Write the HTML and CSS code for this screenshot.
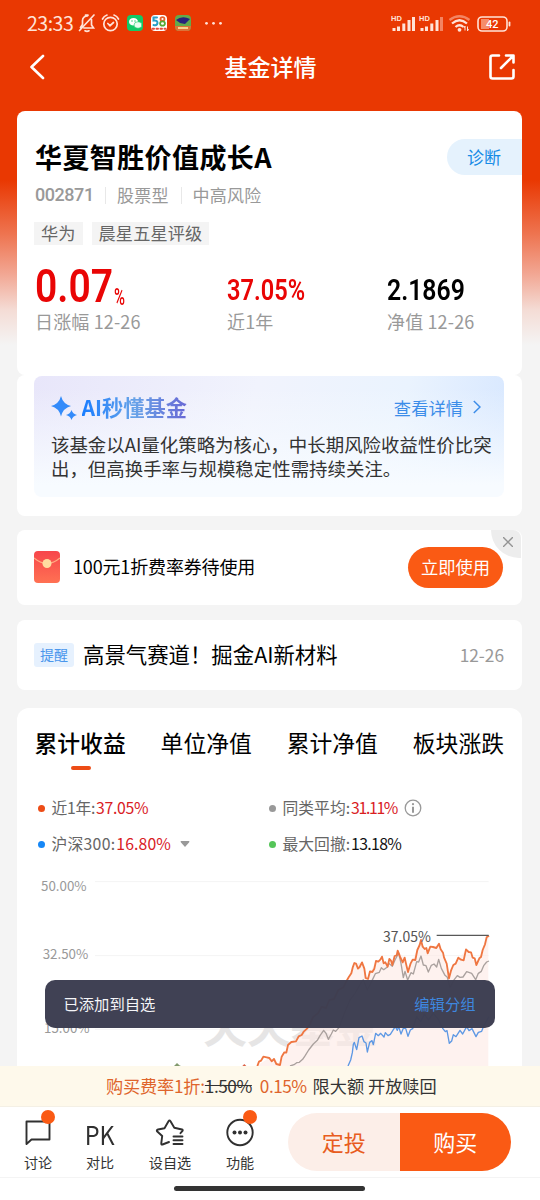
FILE: index.html
```html
<!DOCTYPE html>
<html lang="zh-CN">
<head>
<meta charset="utf-8">
<title>基金详情</title>
<link rel="stylesheet" href="styles.css">
</head>
<body>
<div class="app">
  <div class="status">
    <span class="clock">23:33</span>
    <svg class="status-left" width="150" height="22" viewBox="0 0 150 22" fill="none" stroke="#ffe3d8" stroke-width="1.700" stroke-linecap="round">
      <path d="M3.500 15.500 5.500 12.500V8.500C5.500 5.500 8 3.800 10.500 3.800M14.500 7.500V13L16.500 16H7M2.500 18.500 17 3M8 18.800Q10 20 12 18.800M8.500 3.200H11"/>
      <circle cx="33.500" cy="12" r="6.700"/><path d="M30.800 11.500 33 13.700 36.500 10.500M25.500 7Q27 4 30 3M37 3Q40 4 41.500 7"/>
      <g stroke="none"><rect x="50" y="3" width="16" height="16" rx="4" fill="#12c967"/><ellipse cx="56.500" cy="9.800" rx="4.500" ry="3.800" fill="#fff"/><ellipse cx="61" cy="13" rx="4" ry="3.300" fill="#e8fff0" stroke="#12c967" stroke-width=".6"/><circle cx="55" cy="9" r=".7" fill="#12c967"/><circle cx="58" cy="9" r=".7" fill="#12c967"/>
      <rect x="74" y="3" width="16" height="16" rx="4" fill="#fff"/></g>
      <path d="M80 5.500H76.500V8.500Q80.500 8 80.500 11 80 14 76.500 13" stroke="#29a0c8" stroke-width="2"/><ellipse cx="85.500" cy="7" rx="2" ry="1.800" stroke="#e8632c" stroke-width="1.800"/><ellipse cx="85.500" cy="11.500" rx="2.400" ry="2.200" stroke="#55a935" stroke-width="1.800"/><path d="M75.500 16.700H88.500" stroke="#e54a3a" stroke-width="2" stroke-dasharray="1.500 2.500"/>
      <g stroke="none"><rect x="98" y="3" width="16" height="16" rx="4" fill="#62a94c"/><path d="M99 8Q105 3 113 7L108 12 103 11Z" fill="#28227c"/><path d="M98 14H114Q114 19 110 19H102Q98 19 98 14Z" fill="#dd7138"/><path d="M101 15H111V17H101Z" fill="#f8d28c"/></g>
      <g fill="#ffe3d8" stroke="none"><circle cx="129.500" cy="11.300" r="1.400"/><circle cx="136.500" cy="11.300" r="1.400"/><circle cx="143.500" cy="11.300" r="1.400"/></g>
    </svg>
    <svg class="status-right" width="122" height="20" viewBox="0 0 122 20">
      <g fill="#ffe3d8"><text class="hd" x="0" y="6.500">HD</text><path d="M1.500 14h3v3h-3zM6 12.500h3V17H6zM11.300 9.500h3V17h-3zM16.500 6h3v11h-3zM21 3h3v14h-3z"/><text class="hd" x="28" y="6.500">HD</text><path d="M29.500 14h3v3h-3zM34 12.500h3V17h-3zM39.300 9.500h3V17h-3zM44.500 6h3v11h-3z"/><path opacity=".45" d="M49 3h3v14h-3z"/></g>
      <g fill="none" stroke="#ffe3d8" stroke-width="2.300"><path opacity=".45" d="M58.500 6Q68.500-1.500 78.500 6"/><path d="M61 9.500Q68.500 3 76 9.500M64.500 13Q68.500 9.500 72.500 13"/></g><circle cx="68.500" cy="15.800" r="1.900" fill="#ffe3d8"/><path d="M74 12v4.500M76.500 17v-4.500M73 14l1-2M77.500 15l-1 2" stroke="#ffe3d8"/>
      <rect x="87" y="3" width="29" height="14" rx="4" fill="none" stroke="#ffe3d8" stroke-width="1.600"/><path d="M90 5h8v10h-8z" fill="#f58d6b"/><path d="M118.500 8.500v3" stroke="#ffe3d8" stroke-width="1.800" stroke-linecap="round"/><text class="battery" x="95" y="14" fill="#fff">42</text>
    </svg>
  </div>
  <header class="topbar">
    <svg width="16" height="26" viewBox="0 0 16 26" fill="none" stroke="#fff" stroke-width="2.600" stroke-linecap="round" stroke-linejoin="round"><path d="M13 2 1.500 13 13 24"/></svg>
    <h1>基金详情</h1>
    <svg width="26" height="26" viewBox="0 0 26 26" fill="none" stroke="#fff" stroke-width="2.600" stroke-linecap="round" stroke-linejoin="round"><path d="M10 1.500H3.500Q1.500 1.500 1.500 3.500V22.500Q1.500 24.500 3.500 24.500H22.500Q24.500 24.500 24.500 22.500V16M17 1.500H24.500V8.500M24 2 12 14"/></svg>
  </header>

  <section class="card hero">
    <div class="fund-head"><h2>华夏智胜价值成长A</h2><span class="diagnose">诊断</span></div>
    <div class="meta"><span class="code">002871</span><span>股票型</span><span>中高风险</span></div>
    <div class="tags"><span>华为</span><span>晨星五星评级</span></div>
    <div class="stats">
      <div><div class="figure red"><b class="big">0.07</b><b class="unit">%</b></div><p>日涨幅 12-26</p></div>
      <div><div class="figure red"><b class="mid rate">37.05%</b></div><p>近1年</p></div>
      <div><div class="figure"><b class="mid">2.1869</b></div><p>净值 12-26</p></div>
    </div>
  </section>

  <section class="card ai-card">
    <div class="ai">
      <div class="ai-head">
        <svg width="26" height="26" viewBox="0 0 26 26" fill="#338bfa"><path d="M10 2Q12 10 20 12 12 14 10 22.500 8 14 0 12 8 10 10 2ZM20.500 16Q21.700 19.800 26 21 21.700 22.200 20.500 26 19.300 22.200 15 21 19.300 19.800 20.500 16Z"/></svg>
        <b>AI秒懂基金</b><span>查看详情</span>
        <svg width="8" height="14" viewBox="0 0 8 14" fill="none" stroke="#3c8de9" stroke-width="1.500"><path d="M.8 1 7 7 .8 13"/></svg>
      </div>
      <p>该基金以AI量化策略为核心，中长期风险收益性价比突<br>出，但高换手率与规模稳定性需持续关注。</p>
    </div>
  </section>

  <section class="card coupon">
    <svg class="envelope" width="26" height="32" viewBox="0 0 26 32"><defs><linearGradient id="env" x2="0" y2="1"><stop stop-color="#f7464b"/><stop offset="1" stop-color="#ff7153"/></linearGradient></defs><rect width="26" height="32" rx="4" fill="url(#env)"/><path d="M0 7Q13 18 26 7" fill="none" stroke="#ffad83" stroke-width="1.200"/><circle cx="13" cy="12.500" r="4.500" fill="#ffdca0"/></svg>
    <span class="coupon-text">100元1折费率券待使用</span>
    <span class="use">立即使用</span>
    <span class="close"><svg width="10" height="10" viewBox="0 0 10 10" stroke="#939393" stroke-width="1.400"><path d="M0 0 10 10M10 0 0 10"/></svg></span>
  </section>

  <section class="card notice"><span class="remind">提醒</span><span class="headline">高景气赛道！掘金AI新材料</span><time>12-26</time></section>

  <section class="card performance">
    <nav class="tabs"><span class="active">累计收益</span><span>单位净值</span><span>累计净值</span><span>板块涨跌</span></nav>
    <div class="legend">
      <div><i class="orange"></i><span class="year">近1年:</span><em>37.05%</em></div>
      <div><i></i>同类平均:<em class="ones">31.11%</em><svg class="info" width="18" height="18" viewBox="0 0 18 18"><circle cx="9" cy="9" r="7.800" fill="none" stroke="#999" stroke-width="1.300"/><circle cx="9" cy="5.200" r="1.100" fill="#999"/><path d="M9 7.800v6" stroke="#999" stroke-width="2"/></svg></div>
      <div><i class="blue"></i><span class="index">沪深300:</span><em class="wide">16.80%</em><svg class="caret" width="10" height="6" viewBox="0 0 10 6"><path d="M1 0H9Q10 .5 9 1.500L5 6 1 1.500Q0 .5 1 0Z" fill="#999"/></svg></div>
      <div><i class="green"></i>最大回撤:<em class="dark">13.18%</em></div>
    </div>
    <svg class="chart" width="505" height="195" viewBox="-759 3 1515 585">
      <g stroke="#f4f4f4" stroke-width="3"><path d="M-525 35H656M-525 257H656M-525 478H656"/></g>
      <text class="watermark" x="-200" y="520">天天基金</text>
      <path fill="#fdeae4" fill-opacity=".6" d="M-40 588 0 562 12 572 20 585 28 584 42 548 65 516 95 490 110 475 140 430 175 405 205 370 236 328 256 279 275 279 291 330 318 270 345 275 365 285 384 245 403 263 415 302 440 240 452 213 470 245 507 223 520 260 537 325 550 290 568 263 590 238 619 282 638 240 655 197V588Z"/>
      <g fill="none" stroke-linejoin="round" stroke-width="4">
        <path stroke="#aaa19e" d="M60 588 72 584 80 578 88 577 98 568 106 556 116 540 130 522 142 511 150 497 161 481 168 490 175 508 184 492 190 480 197 484 207 473 223 430 240 390 255 370 272 340 280 329 292 360 305 334 316 311 328 307 334 293 341 299 352 291 356 280 367 289 375 270 386 249 393 280 400 323 405 304 413 330 423 308 430 312 440 275 446 276 453 258 460 285 468 287 475 306 484 286 492 282 500 291 506 268 514 295 525 316 532 322 540 353 551 331 562 317 570 322 579 321 590 305 605 310 617 329 625 310 634 304 641 287 650 276 657 273"/>
        <path stroke="#5d98e4" d="M234 588 242 570 247 548 250 523 253 517 260 539 267 503 276 498 282 515 288 519 292 546 299 517 306 512 310 524 317 490 325 497 332 490 342 501 346 488 354 497 361 493 370 479 376 470 382 481 386 470 393 492 400 475 407 475 414 499 421 480 428 476 440 440 452 455 463 432 475 450 490 430 505 448 518 475 526 485 531 482 538 520 545 513 550 494 558 500 570 481 578 492 590 470 597 482 606 476 618 500 625 487 635 484 642 466 657 440"/>
        <path stroke="#ef7641" stroke-width="5.500" d="M-38 588-33 575-27 572-20 560-10 562-2 564 5 574 12 567 19 582 30 585 35 560 43 547 49 548 54 525 64 516 78 514 86 499 95 495 101 485 112 475 120 462 130 440 144 430 155 410 168 414 178 390 192 387 205 360 220 352 230 332 236 322 244 310 248 293 253 279 258 281 264 296 269 291 276 277 283 296 287 324 294 327 300 304 307 306 313 296 318 273 325 275 331 269 336 260 341 280 346 277 353 290 358 267 363 272 367 285 374 258 380 256 383 242 390 260 398 277 404 263 408 281 414 306 422 280 428 269 436 270 442 240 449 225 453 210 458 230 464 237 469 234 473 250 481 230 489 231 499 234 507 221 512 238 519 248 522 262 530 281 537 325 543 302 550 285 557 281 565 263 573 269 581 271 588 238 596 246 603 247 608 263 614 265 619 285 628 265 633 261 638 240 645 223 650 202 657 197"/>
        <path d="M500 196H656" stroke="#585858"/>
      </g>
      <path fill="#829a6d" d="M-288 588-279 579-272 586-267 588Z"/><path fill="#dc6348" d="M-83 588-77 582-71 588Z"/>
      <g class="axis"><text x="-687" y="64">50.00%</text><text x="-682" y="268">32.50%</text><text x="-678" y="490">15.00%</text><text class="peak" x="339" y="215">37.05%</text></g>
    </svg>
  </section>

  <div class="fee"><span>购买费率1折:</span><s>1.50%</s><span class="cut">0.15%</span><span class="state">限大额 开放赎回</span></div>
  <footer>
    <div class="actions">
      <div><svg width="30" height="30" viewBox="0 0 30 30" fill="none" stroke="#303030" stroke-width="1.900" stroke-linejoin="round"><path d="M3.500 4.500H26.500V22.500H8.500L3.500 27Z"/></svg><i></i><span>讨论</span></div>
      <div><strong>PK</strong><span>对比</span></div>
      <div><svg width="30" height="30" viewBox="0 0 30 30" fill="none" stroke="#303030" stroke-width="1.900" stroke-linejoin="round" stroke-linecap="round"><path d="M14 25 7.500 27.500Q6 28 6.300 26L7.200 19 2 14.200Q1.300 13 3 12.500L9.500 11.300 13.500 4.200Q14.500 2.800 15.500 4.200L19.300 10.800 27 12.500Q28.300 13 27.300 14.200L25.500 16.200M18.500 19.500H27.500M18.500 23.300H27.500M18.500 27H27.500"/></svg><span>设自选</span></div>
      <div><svg width="30" height="30" viewBox="0 0 30 30"><circle cx="15" cy="15.500" r="12.700" fill="none" stroke="#303030" stroke-width="1.900"/><g fill="#303030"><circle cx="9.500" cy="15.500" r="2"/><circle cx="15" cy="15.500" r="2"/><circle cx="20.500" cy="15.500" r="2"/></g></svg><i></i><span>功能</span></div>
    </div>
    <div class="trade"><span>定投</span><span>购买</span></div>
  </footer>
  <div class="home"><span></span></div>
  <div class="toast"><span>已添加到自选</span><a>编辑分组</a></div>
</div>
</body>
</html>
```
FILE: styles.css
```css
* { box-sizing: border-box; }
body { margin: 0; background: #f4f4f4; color: #000; font-family: "Noto Sans CJK SC", sans-serif; white-space: nowrap; }
h1, h2, p { margin: 0; }
i, em { font-style: normal; }
svg { display: block; flex: none; }
.app { position: relative; display: flex; flex-direction: column; width: 540px; height: 1200px; overflow: hidden; background: linear-gradient(#e93802 0, #e93802 180px, #ee7450 234px, #f2a895 275px, #f4dcd5 310px, #f4f4f4 345px); }
.status { display: flex; height: 46px; padding: 12px 27.500px 0 27px; }
.clock { width: 50px; color: #ffe3d8; font-size: 19.500px; line-height: 21px; letter-spacing: -.5px; }
.status-right { margin: 1.500px 0 0 auto; }
.hd { font: bold 7.500px "Liberation Sans", sans-serif; }
.battery { font: 500 11px Roboto, sans-serif; }
.topbar { display: flex; height: 65px; padding: 8px 25px 0 30px; justify-content: space-between; }
.topbar h1 { padding-left: 6px; font-size: 23px; line-height: 25px; font-weight: 500; color: #fff; }
.card { position: relative; flex: none; width: 505px; margin-left: 17px; background: #fff; border-radius: 8px; }
.hero { height: 264px; padding: 28px 0 0 18px; }
.fund-head { display: flex; height: 36px; justify-content: space-between; }
.fund-head h2 { font-size: 27px; line-height: 35px; font-weight: 700; letter-spacing: .4px; }
.diagnose { width: 75px; padding-left: 20px; border-radius: 18px 0 0 18px; background: #e5f2fd; color: #168be6; font-size: 17px; line-height: 35px; }
.meta { display: flex; height: 22px; margin-top: 9px; align-items: center; color: #999; font-size: 17px; line-height: 22px; letter-spacing: .2px; }
.meta span + span { position: relative; margin-left: 12px; padding-left: 12px; }
.meta span + span::before { content: ""; position: absolute; left: 0; top: 3px; width: 1px; height: 17px; background: #e8e8e8; }
.meta .code { width: 58px; font: 500 18px/22px Roboto, sans-serif; letter-spacing: -.45px; }
.tags { display: flex; gap: 9px; margin: 16px 0 0 -1px; }
.tags span { height: 23px; padding: 0 7px; background: #f4f4f4; color: #666; font-size: 17.200px; line-height: 22px; letter-spacing: .1px; }
.stats { display: grid; grid-template-columns: 192px 160px 1fr; margin-top: 21px; }
.figure { position: relative; height: 45px; line-height: 1; font-family: Roboto, sans-serif; }
.figure b { position: absolute; left: 0; transform-origin: 0 100%; line-height: 1; }
.figure .big { bottom: 2px; font-size: 46.500px; font-weight: 600; transform: scaleX(.84); }
.figure .mid { bottom: 6px; font-size: 29.500px; font-weight: 600; transform: scaleX(.84); }
.figure .rate { transform: scaleX(.8); }
.figure .unit { left: 79px; bottom: 4px; font-size: 24px; font-weight: 500; line-height: 20px; transform: scaleX(.62); }
.red { color: #e90505; }
.stats p { color: #999; font-size: 18px; line-height: 20px; letter-spacing: .15px; }
.ai-card { height: 141px; padding: 1px 18px 0 17px; }
.ai { height: 121px; padding: 18px 17px 0; border-radius: 8px; background: linear-gradient(#fff0 10%, #f7fbff 90%), linear-gradient(105deg, #e8e6fa, #f1f3fd 45%, #eaf3fe 75%, #d5e6ff); }
.ai-head { display: flex; height: 26px; align-items: center; }
.ai-head b { margin: 0 auto 0 4.500px; font-size: 21.200px; line-height: 26px; color: transparent; background: linear-gradient(90deg, #197dff, #68a3e8 50%, #6868d5); background-clip: text; }
.ai-head span { margin-right: 10px; color: #3c8de9; font-size: 17.300px; }
.ai-head svg:last-child { margin-right: 6px; }
.ai p { margin-top: 11.500px; font-size: 18.450px; line-height: 24.500px; color: #333; }
.coupon { display: flex; height: 75px; margin-top: 14px; padding: 0 19px 0 17px; align-items: center; }
.envelope { margin-top: -2px; }
.coupon-text { margin: -3px auto 0 13px; font-size: 18px; letter-spacing: -.15px; }
.use { width: 95px; height: 41px; border-radius: 21px; background: #fa5a14; color: #fff; font-size: 17.300px; line-height: 40px; text-align: center; }
.close { position: absolute; top: 0; right: 1px; width: 30px; height: 28px; padding: 7px 0 0 12px; background: #ededed; border-radius: 0 8px 0 28px; }
.notice { display: flex; height: 70px; margin-top: 15px; padding: 0 18px 0 17px; align-items: center; }
.remind { width: 40px; height: 24px; border-radius: 3px; background: #e6f1fe; color: #4a96ec; font-size: 14px; line-height: 22px; text-align: center; }
.headline { margin: -3px auto 0 9px; font-size: 21.400px; }
.notice time { margin-top: -2px; color: #999; font-size: 17.300px; }
.performance { flex: 1; margin-top: 18px; min-height: 0; border-radius: 12px 12px 0 0; overflow: hidden; }
.tabs { display: flex; height: 62px; padding: 19px 18px 0 17.500px; justify-content: space-between; font-size: 22.800px; line-height: 32px; }
.tabs .active { position: relative; font-weight: 500; }
.tabs .active::after { content: ""; position: absolute; left: 36px; top: 39px; width: 20px; height: 4px; border-radius: 2px; background: #ed4c16; }
.legend { display: grid; grid-template-columns: 231px 1fr; grid-auto-rows: 36px; padding: 20px 0 0 21px; height: 101px; color: #666; font-size: 15.800px; }
.legend > div { display: flex; align-items: center; line-height: 36px; }
.legend i { width: 7px; height: 7px; margin-right: 6.500px; border-radius: 50%; background: #999; }
.legend .orange { background: #ed4c16; }
.legend .blue { background: #1687f6; }
.legend .green { background: #55c559; }
.legend em { margin-left: 1px; color: #d9201f; letter-spacing: -.3px; }
.legend .year { letter-spacing: -.3px; }
.legend .index { letter-spacing: .25px; }
.legend .wide { letter-spacing: .1px; }
.legend .ones { letter-spacing: -1.350px; }
.legend .dark { color: #111; letter-spacing: -.65px; }
.info { margin-left: 7px; }
.caret { margin-left: 9px; }
.axis { fill: #999; font-size: 40px; }
.axis .peak { fill: #555; font-size: 42px; }
.watermark { fill: #e6e5e5; font-size: 131px; font-weight: 700; }
.fee { display: flex; flex: none; height: 41px; padding-left: 106px; background: #fef9eb; border-bottom: 1px solid #f4f0e5; color: #df652c; font-size: 17.200px; line-height: 40px; letter-spacing: -.2px; }
.fee s, .fee .state { color: #333; }
.fee s { letter-spacing: -.45px; }
.fee .cut { margin: 0 6px 0 8px; letter-spacing: -.5px; }
.fee .state { letter-spacing: 0; }
footer { display: flex; flex: none; height: 71px; background: #fff; border-bottom: 1px solid #f4f4f4; }
.actions { display: flex; flex: none; width: 270px; padding-left: 3px; }
.actions div { position: relative; display: flex; flex: none; flex-direction: column; align-items: center; width: 70px; padding-top: 10px; }
.actions div:nth-child(2) { margin-left: -8px; }
.actions i { position: absolute; top: 3px; left: 38px; width: 14px; height: 14px; border-radius: 50%; background: #fa5a14; }
.actions strong { height: 30px; font-size: 26px; line-height: 33px; font-weight: 400; color: #303030; transform: scaleX(.9); }
.actions span { margin-top: 5px; color: #333; font-size: 14.100px; line-height: 20px; }
.trade { display: flex; flex: none; width: 223px; height: 58px; margin: 6px 0 0 18px; border-radius: 29px; overflow: hidden; font-size: 22px; line-height: 56px; text-align: center; }
.trade span { flex: 1; background: #fceee8; color: #e85c20; }
.trade span:last-child { background: #fa5a14; color: #fff; }
.home { flex: none; height: 22px; padding: 8px 0 0 174px; background: #fff; }
.home span { display: block; width: 191px; height: 4.500px; border-radius: 3px; background: #333; }
.toast { position: absolute; left: 44.500px; top: 979.500px; display: flex; width: 450px; height: 48px; padding: 0 19px; justify-content: space-between; border-radius: 10px; background: #3c3d51fa; color: #f5f5f8; font-size: 15.300px; line-height: 46px; }
.toast a { color: #3e87df; }
```
